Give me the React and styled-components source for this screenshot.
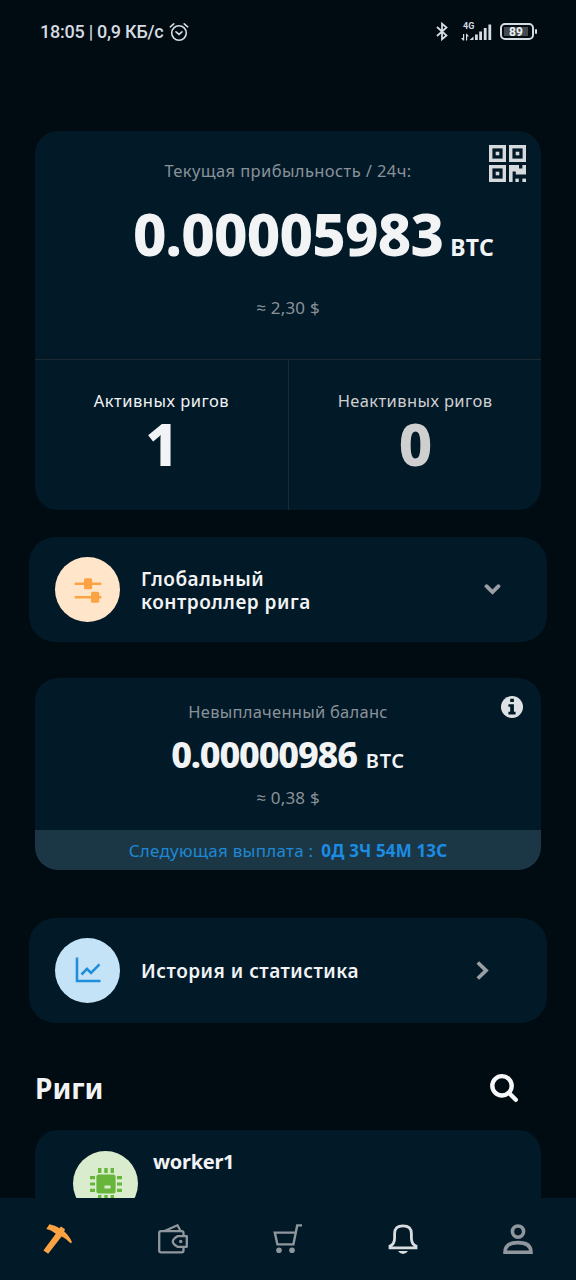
import styled, { createGlobalStyle } from "styled-components";

const App = () => {
  return (
    <>
      <GlobalStyle />
      <Screen>
        <StatusBar />
        <Content>
          <EarningsCard />
          <ActionCard top={27}>
            <IconCircle color="#ffe6cb">
              <SlidersIcon />
            </IconCircle>
            <ActionTitle>
              Глобальный
              <br />
              контроллер рига
            </ActionTitle>
            <DownIcon />
          </ActionCard>
          <BalanceCard />
          <ActionCard top={47.5}>
            <IconCircle color="#c5e3f6">
              <ChartIcon />
            </IconCircle>
            <ActionTitle>История и статистика</ActionTitle>
            <RightIcon />
          </ActionCard>
          <SectionHeader>
            <SectionTitle>Риги</SectionTitle>
            <SearchIcon />
          </SectionHeader>
          <RigCard>
            <IconCircle color="#d9edce">
              <ChipIcon />
            </IconCircle>
            <RigName>worker1</RigName>
          </RigCard>
        </Content>
        <BottomNav />
      </Screen>
    </>
  );
};

export default App;

const StatusBar = () => (
  <Status>
    <Clock>18:05 | 0,9 КБ/с</Clock>
    <AlarmIcon />
    <StatusRight>
      <BluetoothIcon />
      <Network>
        <NetworkType>4G</NetworkType>
        <SignalIcon />
      </Network>
      <Battery>
        <BatteryLevel>89</BatteryLevel>
      </Battery>
    </StatusRight>
  </Status>
);

const EarningsCard = () => (
  <Card>
    <EarningsTop>
      <Label spacing={0.4}>Текущая прибыльность / 24ч:</Label>
      <Amount>
        <BigNumber>0.00005983</BigNumber>
        <Currency>BTC</Currency>
      </Amount>
      <Fiat>≈ 2,30 $</Fiat>
      <QrCorner>
        <QrIcon />
      </QrCorner>
    </EarningsTop>
    <RigCounts>
      <RigCount color="#f1f3f5">
        <CountLabel spacing={0.5}>Активных ригов</CountLabel>
        <BigNumber>1</BigNumber>
      </RigCount>
      <RigCount color="#cfcfd0">
        <CountLabel spacing={0.4}>Неактивных ригов</CountLabel>
        <BigNumber>0</BigNumber>
      </RigCount>
    </RigCounts>
  </Card>
);

const BalanceCard = () => (
  <Balance>
    <BalanceTop>
      <Label spacing={0.25}>Невыплаченный баланс</Label>
      <BalanceAmount>
        <BalanceNumber>0.00000986</BalanceNumber>
        <BalanceCurrency>BTC</BalanceCurrency>
      </BalanceAmount>
      <BalanceFiat>≈ 0,38 $</BalanceFiat>
      <InfoCorner>
        <InfoIcon />
      </InfoCorner>
    </BalanceTop>
    <Payout>
      <span>Следующая выплата :</span>
      <PayoutTime>0Д 3Ч 54М 13С</PayoutTime>
    </Payout>
  </Balance>
);

const BottomNav = () => (
  <Nav>
    <NavItem color="#fba342">
      <PickaxeIcon />
    </NavItem>
    <NavItem>
      <WalletIcon />
    </NavItem>
    <NavItem>
      <CartIcon />
    </NavItem>
    <NavItem color="#d9dde0">
      <BellIcon />
    </NavItem>
    <NavItem>
      <UserIcon />
    </NavItem>
  </Nav>
);

/* icons */

const AlarmIcon = () => (
  <svg width="20" height="20" viewBox="0 0 20 20" fill="none" stroke="currentColor" strokeWidth="1.6" strokeLinecap="round">
    <circle cx="10" cy="11" r="7.3" />
    <path d="M7 9.8 L10 12.4 L13 9.8" />
    <path d="M1.3 4.8 L4.8 1.8 M18.7 4.8 L15.2 1.8" />
  </svg>
);

const BluetoothIcon = () => (
  <svg width="12" height="19" viewBox="0 0 12 19" fill="none" stroke="currentColor" strokeWidth="1.8">
    <path d="M1 5 L10.5 13.5 L6 17.3 V1.7 L10.5 5.5 L1 14" />
  </svg>
);

const SignalIcon = () => (
  <svg width="31" height="18" viewBox="0 0 31 18" fill="currentColor">
    <path d="M2 11 H3.2 V17.5 H2 L0 15 H2 Z M5 17.5 H6.2 V13.5 H8 L5.8 10.8 H5 Z" />
    <path d="M8.5 17 L12.5 13.5 V17 Z" />
    <rect x="14" y="11.5" width="2.8" height="5.5" />
    <rect x="18.2" y="8.5" width="2.8" height="8.5" />
    <rect x="22.8" y="5" width="2.8" height="12" />
    <rect x="27.4" y="1.5" width="2.8" height="15.5" />
  </svg>
);

const QrIcon = () => (
  <svg width="37" height="37" viewBox="0 0 37 37" fill="none" stroke="currentColor" strokeWidth="3.4">
    <rect x="1.7" y="1.7" width="13.6" height="13.6" />
    <rect x="21.7" y="1.7" width="13.6" height="13.6" />
    <rect x="1.7" y="21.7" width="13.6" height="13.6" />
    <g fill="currentColor" stroke="none">
      <rect x="6.7" y="6.7" width="3.6" height="3.6" />
      <rect x="26.7" y="6.7" width="3.6" height="3.6" />
      <rect x="6.7" y="26.7" width="3.6" height="3.6" />
      <path d="M20 20 H30 V23.4 H33.4 V20 H37 V29.6 H26.8 V26.6 H23.6 V37 H20 Z" />
      <rect x="26.4" y="33.6" width="3.4" height="3.4" />
      <rect x="33.4" y="33.6" width="3.6" height="3.4" />
    </g>
  </svg>
);

const InfoIcon = () => (
  <svg width="22" height="22" viewBox="0 0 22 22">
    <circle cx="11" cy="11" r="11" fill="#dfe2e4" />
    <path d="M9.2 2.8 H12.9 V6 H9.2 Z M7.4 8.2 H12.9 V15.8 H14.6 V18.4 H7.4 V15.8 H9.2 V10.8 H7.4 Z" fill="#021928" />
  </svg>
);

const SlidersIcon = () => (
  <svg width="28" height="26" viewBox="0 0 28 26" fill="#fba342">
    <rect x="0.5" y="5.6" width="27" height="2.4" rx="1" />
    <rect x="0.5" y="19" width="27" height="2.4" rx="1" />
    <rect x="10" y="1.3" width="8.2" height="11" rx="1.5" />
    <rect x="17" y="14.8" width="8.2" height="11" rx="1.5" />
  </svg>
);

const ChartIcon = () => (
  <svg width="26" height="26" viewBox="0 0 26 26" fill="none" stroke="#1f8fdc" strokeWidth="2.6">
    <path d="M2 0.6 V24 H25.5" />
    <path d="M6.5 17.5 L12 11.8 L16 15.8 L24.5 7.3" />
  </svg>
);

const ChipIcon = () => (
  <svg width="32" height="32" viewBox="0 0 32 32" fill="#68b53c">
    <path d="M8 0h3.4v5H8z M14.3 0h3.4v5h-3.4z M20.6 0H24v5h-3.4z M8 27h3.4v5H8z M14.3 27h3.4v5h-3.4z M20.6 27H24v5h-3.4z" />
    <path d="M0 8h5v3.2H0z M0 14.4h5v3.2H0z M0 20.8h5V24H0z M27 8h5v3.2h-5z M27 14.4h5v3.2h-5z M27 20.8h5V24h-5z" />
    <rect x="6.4" y="6.4" width="19.2" height="19.2" rx="2.5" />
    <rect x="14.5" y="17.5" width="6" height="3" fill="#d9edce" />
  </svg>
);

const DownIcon = () => (
  <Chevron width="17" height="11" viewBox="0 0 17 11" right={46}>
    <path d="M2.5 2.2 L8.5 8 L14.5 2.2" strokeLinecap="round" />
  </Chevron>
);

const RightIcon = () => (
  <Chevron width="13" height="19" viewBox="0 0 13 19" right={58}>
    <path d="M1.8 1.5 L10 9.5 L1.8 17.5" />
  </Chevron>
);

const SearchIcon = () => (
  <svg width="30" height="30" viewBox="0 0 30 30" fill="none" stroke="#f5f7f8" strokeWidth="4.4" strokeLinecap="round">
    <circle cx="13" cy="12.8" r="9.7" />
    <path d="M20.5 20.5 L26.8 26.8" />
  </svg>
);

const PickaxeIcon = () => (
  <svg width="30" height="30" viewBox="0 0 30 30" fill="currentColor">
    <path d="M0.4 26.4 L12.8 9.8 C10 7.4 6.9 5.9 3.3 5 L6.4 0.3 C10 1 13.3 2.3 16.4 4.2 L18 2.5 L22 5.2 L21.2 7.6 C24.6 10.6 27.5 14.2 29 18.2 L27.6 19.2 C24.5 16.1 21.8 14 18.6 12.4 L5.2 29.8 Z" />
  </svg>
);

const WalletIcon = () => (
  <svg width="30" height="30" viewBox="0 0 30 30" fill="none" stroke="currentColor" strokeWidth="2.3" strokeLinejoin="round">
    <path d="M25.5 12 V9 Q25.5 7.2 23.7 7.2 H3 Q1.2 7.2 1.2 9 V26.6 Q1.2 28.4 3 28.4 H23.7 Q25.5 28.4 25.5 26.6 V23" />
    <path d="M6.5 7 L19.5 1.3 L22.6 7" />
    <path d="M28.8 12.2 V22.8 H19.5 Q14.8 20 14.8 17.5 Q14.8 15 19.5 12.2 Z" />
    <circle cx="22.7" cy="17.5" r="1.7" fill="currentColor" stroke="none" />
  </svg>
);

const CartIcon = () => (
  <svg width="30" height="30" viewBox="0 0 30 30" fill="none" stroke="currentColor" strokeWidth="2.4">
    <path d="M29 1.4 H24.2 L20.4 20.4 H4.4 L1.8 8.6 H22.5" />
    <circle cx="6" cy="26.2" r="2.8" fill="currentColor" stroke="none" />
    <circle cx="19" cy="26.2" r="2.8" fill="currentColor" stroke="none" />
  </svg>
);

const BellIcon = () => (
  <svg width="30" height="30" viewBox="0 0 30 30" fill="none" stroke="currentColor" strokeWidth="2.8">
    <path d="M2 23.8 H28 V22 Q23.4 20.4 23.4 14 V9.6 Q23.4 1.8 15 1.8 Q6.6 1.8 6.6 9.6 V14 Q6.6 20.4 2 22 Z" />
    <path d="M10 27 H20 Q18 30 15 30 Q12 30 10 27 Z" fill="currentColor" stroke="none" />
  </svg>
);

const UserIcon = () => (
  <svg width="30" height="30" viewBox="0 0 30 30" fill="none" stroke="currentColor" strokeWidth="3.6">
    <circle cx="15" cy="7.6" r="5.6" />
    <path d="M2 28.2 H28 Q28 18.6 15 18.6 Q2 18.6 2 28.2 Z" />
  </svg>
);

/* styles */

const GlobalStyle = createGlobalStyle`
  * {
    box-sizing: border-box;
  }

  body {
    margin: 0;
    background: #000b12;
    font-family: "Noto Sans", "Open Sans", sans-serif;
  }

  svg {
    display: block;
    flex-shrink: 0;
  }
`;

const Screen = styled.div`
  display: flex;
  flex-direction: column;
  width: 576px;
  height: 1280px;
  overflow: hidden;
  background: #000b12;
  color: #f1f3f5;
  white-space: nowrap;
`;

const Status = styled.header`
  display: flex;
  align-items: center;
  flex-shrink: 0;
  height: 63px;
  padding: 0 39px 0 40px;
  color: #d5dbe1;
  font-family: Roboto, sans-serif;
`;

const Clock = styled.span`
  margin-right: 6px;
  font-size: 18px;
  font-weight: 500;
  letter-spacing: -0.25px;
`;

const StatusRight = styled.div`
  display: flex;
  align-items: center;
  margin-left: auto;
`;

const Network = styled.div`
  position: relative;
  margin: 0 8px 0 13px;
`;

const NetworkType = styled.span`
  position: absolute;
  top: -1px;
  left: 2px;
  font-size: 9px;
  font-weight: 700;
  line-height: 9px;
`;

const Battery = styled.div`
  position: relative;
  width: 34px;
  height: 17px;
  margin-right: 3px;
  padding: 2px;
  border: 2px solid #d5dbe1;
  border-radius: 5px;

  &::after {
    content: "";
    position: absolute;
    top: 4px;
    right: -5px;
    width: 2px;
    height: 5px;
    border-radius: 1px;
    background: #d5dbe1;
  }
`;

const BatteryLevel = styled.div`
  width: 24px;
  height: 9px;
  background: #42494f;
  color: #eef1f4;
  font-size: 12px;
  font-weight: 700;
  line-height: 10px;
  text-align: center;
`;

const Content = styled.main`
  flex: 1;
  min-height: 0;
  padding: 68px 35px 0;
  overflow: hidden;
`;

const Card = styled.section`
  overflow: hidden;
  border-radius: 23px;
  background: #021928;
`;

const EarningsTop = styled.div`
  position: relative;
  height: 228px;
  padding-top: 28px;
  text-align: center;
`;

const Label = styled.div`
  color: #8a9299;
  font-size: 16.5px;
  line-height: 24px;
  letter-spacing: ${(props) => props.spacing}px;
`;

const Amount = styled.div`
  display: grid;
  grid-template-columns: 1fr auto 1fr;
  align-items: baseline;
  height: 60px;
  margin-top: 21px;
`;

const BigNumber = styled.span`
  grid-column: 2;
  font-size: 58px;
  font-weight: 800;
  line-height: 60px;
  letter-spacing: -0.8px;
`;

const Currency = styled.span`
  margin-left: 7px;
  font-size: 23px;
  font-weight: 700;
  letter-spacing: 0.4px;
  text-align: left;
`;

const Fiat = styled.div`
  margin-top: 32px;
  color: #8a9299;
  font-size: 17px;
  line-height: 24px;
  letter-spacing: 0.2px;
`;

const QrCorner = styled.div`
  position: absolute;
  top: 14px;
  right: 15px;
  color: #d6dadd;
`;

const RigCounts = styled.div`
  display: grid;
  grid-template-columns: 253px 1fr;
  height: 151px;
  border-top: 1px solid #1c2a34;
`;

const RigCount = styled.div`
  display: flex;
  flex-direction: column;
  align-items: center;
  padding-top: 29px;
  color: ${(props) => props.color};

  & + & {
    border-left: 1px solid #1c2a34;
  }
`;

const CountLabel = styled.div`
  margin-bottom: 1px;
  font-size: 16.5px;
  line-height: 24px;
  letter-spacing: ${(props) => props.spacing}px;
`;

const ActionCard = styled.section`
  display: flex;
  align-items: center;
  height: 105px;
  margin: ${(props) => props.top}px -6px 0;
  padding-left: 26px;
  border-radius: 26px;
  background: #021928;
`;

const IconCircle = styled.div`
  display: flex;
  align-items: center;
  justify-content: center;
  flex-shrink: 0;
  width: 65px;
  height: 65px;
  border-radius: 50%;
  background: ${(props) => props.color};
`;

const ActionTitle = styled.div`
  margin-left: 21px;
  padding-top: 3px;
  font-size: 19px;
  font-weight: 600;
  line-height: 23px;
  letter-spacing: 0.5px;
`;

const Chevron = styled.svg`
  margin-left: auto;
  margin-right: ${(props) => props.right}px;
  fill: none;
  stroke: #9a9fa3;
  stroke-width: 3.8px;
`;

const Balance = styled(Card)`
  margin-top: 36px;
`;

const BalanceTop = styled.div`
  position: relative;
  height: 152px;
  padding-top: 22px;
  text-align: center;
`;

const BalanceAmount = styled.div`
  display: flex;
  align-items: baseline;
  justify-content: center;
  height: 40px;
  margin-top: 11px;
`;

const BalanceNumber = styled.span`
  font-size: 36px;
  font-weight: 800;
  line-height: 40px;
  letter-spacing: -1.2px;
`;

const BalanceCurrency = styled.span`
  margin-left: 9px;
  font-size: 20px;
  font-weight: 600;
  letter-spacing: 0.7px;
`;

const BalanceFiat = styled(Fiat)`
  margin-top: 11px;
`;

const InfoCorner = styled.div`
  position: absolute;
  top: 18px;
  right: 18px;
`;

const Payout = styled.div`
  display: flex;
  align-items: center;
  justify-content: center;
  gap: 8px;
  height: 40px;
  background: #1b3745;
  color: #1f87d4;
  font-size: 17px;
  letter-spacing: 0.25px;
`;

const PayoutTime = styled.strong`
  color: #1b8ce4;
  font-weight: 700;
  letter-spacing: 0.15px;
`;

const SectionHeader = styled.div`
  display: flex;
  align-items: center;
  justify-content: space-between;
  height: 40px;
  margin-top: 45.5px;
  padding-right: 22px;
`;

const SectionTitle = styled.h2`
  margin: 0;
  font-size: 28px;
  font-weight: 700;
`;

const RigCard = styled(Card)`
  display: flex;
  height: 150px;
  margin-top: 22px;
  padding: 21px 38px;
`;

const RigName = styled.div`
  margin-left: 15px;
  margin-top: -1px;
  font-size: 20px;
  font-weight: 700;
  line-height: 24px;
  letter-spacing: -0.3px;
`;

const Nav = styled.nav`
  display: grid;
  grid-template-columns: repeat(5, 1fr);
  flex-shrink: 0;
  height: 82px;
  background: #021928;
`;

const NavItem = styled.div`
  display: flex;
  align-items: center;
  justify-content: center;
  color: ${(props) => props.color || "#8f979d"};
`;
